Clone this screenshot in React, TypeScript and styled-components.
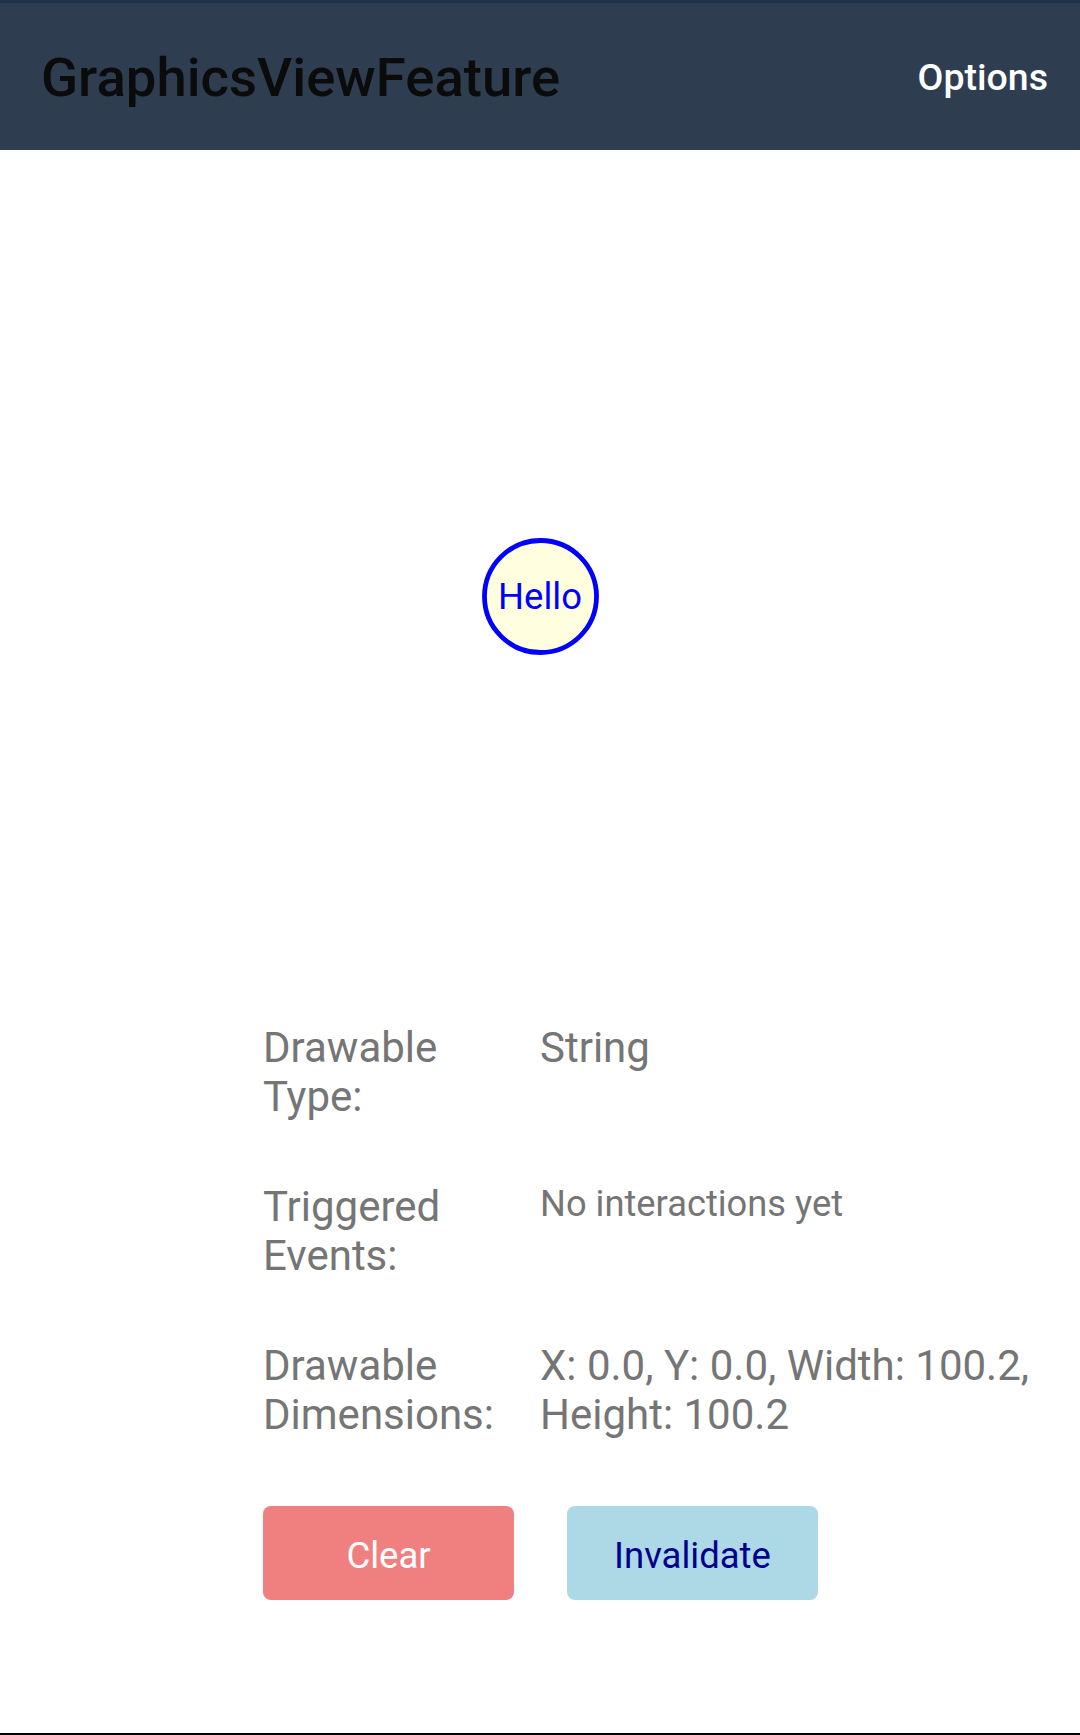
import React from "react";
import styled, { createGlobalStyle } from "styled-components";

const GlobalStyle = createGlobalStyle`
  html, body {
    margin: 0;
    padding: 0;
    background: #ffffff;
    font-family: Roboto, "Noto Sans", "Liberation Sans", sans-serif;
  }
  * { box-sizing: border-box; }
`;

const Page = styled.div`
  width: 1080px;
  height: 1735px;
  display: flex;
  flex-direction: column;
  background: #ffffff;
  border-bottom: 2px solid #000000;
`;

const Toolbar = styled.header`
  height: 150px;
  flex: none;
  display: flex;
  align-items: center;
  justify-content: space-between;
  background: #2e3e50;
  border-top: 3px solid #1f3348;
  padding: 1px 32px 0 41px;
`;

const Title = styled.h1`
  margin: 0;
  font-family: Roboto, "Liberation Sans", sans-serif;
  font-weight: 500;
  font-size: 54.5px;
  color: #0b0b0b;
`;

const MenuItem = styled.button`
  border: none;
  background: none;
  padding: 0;
  font-family: Roboto, "Liberation Sans", sans-serif;
  font-weight: 500;
  font-size: 37.5px;
  color: #ffffff;
  cursor: pointer;
`;

const Canvas = styled.div`
  height: 874px;
  flex: none;
  display: flex;
`;

const Content = styled.section`
  display: flex;
  flex-direction: column;
  padding: 0 20px 0 263px;
`;

const InfoGrid = styled.div`
  display: grid;
  grid-template-columns: 277px 1fr;
  row-gap: 62px;
`;

const Label = styled.div`
  font-size: 42px;
  line-height: 48.5px;
  color: #757575;
  width: 230px;
`;

const Value = styled.div<{ $small?: boolean }>`
  font-size: ${(p) => (p.$small ? "36.3px" : "42px")};
  line-height: ${(p) => (p.$small ? "42px" : "48.5px")};
  color: #757575;
`;

const ButtonRow = styled.div`
  display: flex;
  gap: 53px;
  margin-top: 67px;
`;

const ActionButton = styled.button<{ $variant: "clear" | "invalidate" }>`
  width: 251px;
  height: 94px;
  border: none;
  border-radius: 8px;
  padding: 4px 0 0;
  font-family: Roboto, "Liberation Sans", sans-serif;
  font-size: 36.5px;
  font-weight: 400;
  background: ${(p) => (p.$variant === "clear" ? "#f08080" : "#add8e6")};
  color: ${(p) => (p.$variant === "clear" ? "#ffffff" : "#00008b")};
  cursor: pointer;
`;

const rows: { label: string; value: string; small?: boolean }[] = [
  { label: "Drawable Type:", value: "String" },
  { label: "Triggered Events:", value: "No interactions yet", small: true },
  { label: "Drawable Dimensions:", value: "X: 0.0, Y: 0.0, Width: 100.2, Height: 100.2" },
];

export default function App() {
  return (
    <>
      <GlobalStyle />
      <Page>
        <Toolbar>
          <Title>GraphicsViewFeature</Title>
          <MenuItem>Options</MenuItem>
        </Toolbar>
        <Canvas>
          <svg width="1080" height="874" viewBox="0 0 1080 874">
            <circle cx="540.5" cy="446.5" r="56" fill="#ffffe0" stroke="#0000ff" strokeWidth="4.8" />
            <text
              x="540"
              y="459"
              textAnchor="middle"
              fill="#0000ff"
              fontFamily="Roboto, 'Liberation Sans', sans-serif"
              fontSize="36.5"
            >
              Hello
            </text>
          </svg>
        </Canvas>
        <Content>
          <InfoGrid>
            {rows.map((r) => (
              <React.Fragment key={r.label}>
                <Label>{r.label}</Label>
                <Value $small={r.small}>{r.value}</Value>
              </React.Fragment>
            ))}
          </InfoGrid>
          <ButtonRow>
            <ActionButton $variant="clear">Clear</ActionButton>
            <ActionButton $variant="invalidate">Invalidate</ActionButton>
          </ButtonRow>
        </Content>
      </Page>
    </>
  );
}
